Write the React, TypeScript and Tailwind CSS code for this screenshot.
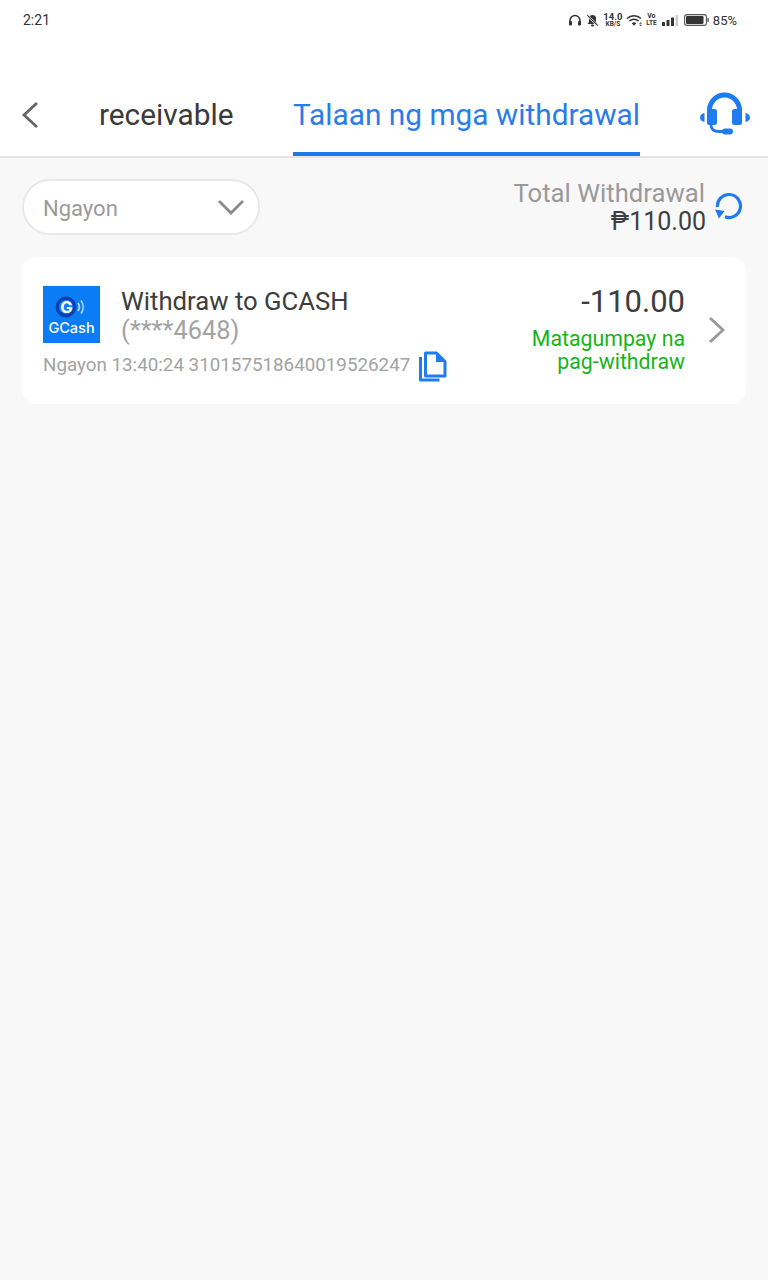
import React from "react";

function StatusIcons() {
  return (
    <div className="flex items-center text-[#333]">
      <svg width="14" height="12" viewBox="0 0 14 12" className="mr-[4px]">
        <path d="M2 9V6.500a5 5 0 0 1 10 0V9" fill="none" stroke="#333" strokeWidth="1.500" />
        <rect x="1" y="7" width="3" height="4.500" rx="1" fill="#333" />
        <rect x="10" y="7" width="3" height="4.500" rx="1" fill="#333" />
      </svg>
      <svg width="13" height="13" viewBox="0 0 13 13" className="mr-[5px]">
        <path d="M6.500 1a3.500 3.500 0 0 0-3.500 3.500V8L1.500 10h10L10 8V4.500A3.500 3.500 0 0 0 6.500 1z" fill="#333" />
        <rect x="5" y="10.500" width="3" height="2" rx="1" fill="#333" />
        <path d="M1.500 1.500l10 10" stroke="#fff" strokeWidth="2.200" />
        <path d="M1.200 1.200l10.500 10.500" stroke="#333" strokeWidth="1.100" />
      </svg>
      <div className="flex flex-col items-center w-[18px] mr-[4px] font-bold">
        <span className="text-[9.500px] leading-[8px]">14.0</span>
        <span className="text-[6.500px] leading-[7px]">KB/S</span>
      </div>
      <svg width="17" height="13" viewBox="0 0 17 13" className="mr-[4px]">
        <path d="M1 4.500a10 10 0 0 1 14 0" fill="none" stroke="#333" strokeWidth="1.500" />
        <path d="M3.400 7a6.600 6.600 0 0 1 9.200 0" fill="none" stroke="#333" strokeWidth="1.500" />
        <path d="M5.800 9.300a3.200 3.200 0 0 1 4.400 0L8 11.800z" fill="#333" />
        <path d="M13 9.800h3l-1.500-1.500zM13 10.800h3l-1.500 1.500z" fill="#333" />
      </svg>
      <div className="flex flex-col items-center w-[9px] mr-[6px] font-bold">
        <span className="text-[7px] leading-[7px]">Vo</span>
        <span className="text-[6.500px] leading-[7px]">LTE</span>
      </div>
      <svg width="16" height="11" viewBox="0 0 16 11" className="mr-[6px]">
        <rect x="0" y="7" width="3" height="4" rx="0.500" fill="#333" />
        <rect x="4.500" y="5" width="3" height="6" rx="0.500" fill="#333" />
        <rect x="9" y="2.500" width="3" height="8.500" rx="0.500" fill="#333" />
        <rect x="13.500" y="0" width="2.500" height="11" rx="0.500" fill="#ccc" />
      </svg>
      <svg width="25" height="12" viewBox="0 0 25 12" className="mr-[4px]">
        <rect x="0.600" y="0.600" width="21.800" height="10.800" rx="2.500" fill="none" stroke="#555" strokeWidth="1.100" />
        <rect x="2" y="2" width="17.500" height="8" rx="1.200" fill="#333" />
        <rect x="23.400" y="4" width="1.500" height="4" rx="0.700" fill="#555" />
      </svg>
      <span className="text-[13px] leading-none">85%</span>
    </div>
  );
}

function GCashLogo() {
  return (
    <div className="w-[57px] h-[57px] bg-[#0a7cf4] shrink-0 flex flex-col items-center">
      <svg width="36" height="24" viewBox="0 0 36 24" className="mt-[9px] ml-[1px]">
        <circle cx="12" cy="12" r="8.800" fill="#0a7cf4" stroke="#0b3fb0" strokeWidth="3.200" />
        <text x="12.500" y="18" textAnchor="middle" fill="#fff" fontSize="16.500" fontWeight="700" fontFamily="Inter, sans-serif">G</text>
        <path d="M24 8a7 7 0 0 1 0 8M27 5.500a11 11 0 0 1 0 13" fill="none" stroke="#a8d4ff" strokeWidth="1.800" />
      </svg>
      <span className="text-white text-[14.500px] leading-[15px] font-medium font-['Inter',sans-serif] mt-[1px]">GCash</span>
    </div>
  );
}

export default function App() {
  return (
    <div className="w-[768px] h-[1280px] bg-[#f8f8f8] flex flex-col font-['Roboto',sans-serif]">
      <header className="bg-white h-[158px] border-b-2 border-[#e3e3e3] flex flex-col shrink-0">
        <div className="h-[40px] pl-[23px] pr-[31px] flex items-center justify-between text-[#333]">
          <span className="text-[14px] leading-none">2:21</span>
          <StatusIcons />
        </div>
        <div className="flex-1 flex items-end relative">
          <button className="w-[60px] h-[116px] flex items-end pb-[27px] pl-[21px]" aria-label="back">
            <svg width="18" height="28" viewBox="0 0 18 28">
              <path d="M16 2L3 14l13 12" fill="none" stroke="#666" strokeWidth="2.800" />
            </svg>
          </button>
          <div className="w-[233px] pb-[23px] pl-[39px] text-[29.800px] leading-[36px] text-[#3a3a3a]">receivable</div>
          <div className="w-[347px] h-[116px] flex items-end justify-center border-b-[4px] border-[#1f78e8] pb-[19px] text-[29.800px] leading-[36px] text-[#2a7de9] whitespace-nowrap">
            Talaan ng mga withdrawal
          </div>
          <svg width="50" height="43" viewBox="0 0 50 43" className="ml-[60px] mb-[21px] shrink-0">
            <path d="M9.500 20V18a15 15 0 0 1 30 0v2" fill="none" stroke="#1f7cf0" strokeWidth="5" />
            <rect x="7" y="17" width="10" height="16" rx="2.500" fill="#1f7cf0" />
            <rect x="32" y="17" width="10" height="16" rx="2.500" fill="#1f7cf0" />
            <path d="M4.500 21v9C2 29.500 0 28 0 25.500S2 21.500 4.500 21zM45.500 21v9c2.500-.5 4.500-2 4.500-4.500S48 21.500 45.500 21z" fill="#1f7cf0" />
            <path d="M11 33c0 4 2 6.500 8 6.500h5" fill="none" stroke="#1f7cf0" strokeWidth="2.800" />
            <rect x="22" y="36.500" width="11" height="6" rx="3" fill="#1f7cf0" />
          </svg>
        </div>
      </header>

      <main className="flex-1 px-[22px]">
        <div className="flex items-start justify-between h-[99px] pt-[21px]">
          <div className="w-[238px] h-[56px] rounded-full bg-white border-2 border-[#e8e8e8] flex items-center justify-between pl-[19px] pr-[13px]">
            <span className="text-[22px] leading-none text-[#9a9a9a] pt-[3px]">Ngayon</span>
            <svg width="28" height="18" viewBox="0 0 28 18">
              <path d="M2 3l12 12L26 3" fill="none" stroke="#8a8a8a" strokeWidth="2.800" />
            </svg>
          </div>
          <div className="flex items-start">
            <div className="flex flex-col items-end">
              <span className="text-[25.700px] leading-[28px] text-[#9a9a9a] pr-[1px]">Total Withdrawal</span>
              <span className="text-[25px] leading-[28px] mt-[1px] text-[#3f3f3f]">₱110.00</span>
            </div>
            <svg width="30" height="30" viewBox="0 0 30 30" className="ml-[8px] mt-[11px] mr-[2px]">
              <path d="M3.500 17A11.500 11.500 0 1 1 11 26.800" fill="none" stroke="#1f7cf0" strokeWidth="3.200" />
              <path d="M1 19.500l9.500 1.500L5 28.500z" fill="#1f7cf0" />
            </svg>
          </div>
        </div>

        <section className="w-[724px] h-[147px] bg-white rounded-[14px] flex pl-[21px] pr-[19px] pt-[29px]">
          <div className="flex-1 flex flex-col min-w-0">
            <div className="flex">
              <GCashLogo />
              <div className="ml-[21px] flex flex-col pt-[1px]">
                <div className="text-[25.700px] leading-[29px] text-[#3d3d3d]">Withdraw to GCASH</div>
                <div className="text-[25.400px] leading-[29px] text-[#a3a3a3]">(****4648)</div>
              </div>
            </div>
            <div className="flex items-start mt-[6px]">
              <span className="text-[18.800px] leading-[24px] mt-[2px] text-[#a3a3a3] whitespace-nowrap">Ngayon 13:40:24 310157518640019526247</span>
              <svg width="28" height="31" viewBox="0 0 28 31" className="ml-[9px] shrink-0">
                <path d="M1.500 6v23h19" fill="none" stroke="#1f7cf0" strokeWidth="3" strokeLinejoin="round" />
                <path d="M6.500 2h11l8.500 8.500V25H6.500z" fill="#fff" stroke="#1f7cf0" strokeWidth="3" strokeLinejoin="round" />
                <path d="M17 1.500l9.500 9.500H17z" fill="#1f7cf0" />
              </svg>
            </div>
          </div>
          <div className="w-[205px] flex flex-col items-end shrink-0">
            <span className="text-[31px] leading-[32px] text-[#3d3d3d]">-110.00</span>
            <span className="text-[21.300px] leading-[23px] text-[#16b416] mt-[9px] text-right">
              Matagumpay na
              <br />
              pag-withdraw
            </span>
          </div>
          <svg width="20" height="28" viewBox="0 0 20 28" className="ml-[22px] mt-[30px] shrink-0">
            <path d="M3 2l13 12L3 26" fill="none" stroke="#999" strokeWidth="2.800" />
          </svg>
        </section>
      </main>
    </div>
  );
}
